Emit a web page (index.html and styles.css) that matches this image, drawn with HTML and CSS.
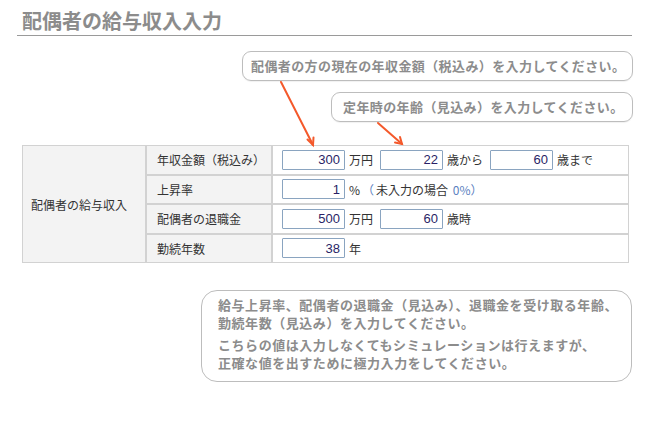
FILE: index.html
```html
<!DOCTYPE html>
<html lang="ja">
<head>
<meta charset="utf-8">
<title>配偶者の給与収入入力</title>
<link rel="stylesheet" href="styles.css">
</head>
<body>
<div class="page">
  <h1 class="title">配偶者の給与収入入力</h1>
  <div class="bubbles">
    <div class="bubble bubble-wide">配偶者の方の現在の年収金額（税込み）を入力してください。</div>
    <div class="bubble bubble-narrow">定年時の年齢（見込み）を入力してください。</div>
  </div>
  <table class="form">
    <tr>
      <th class="group" rowspan="4">配偶者の給与収入</th>
      <th class="label">年収金額（税込み）</th>
      <td class="field"><div class="inputs"><input class="num" value="300"><span class="unit">万円</span><input class="num" value="22"><span class="unit">歳から</span><input class="num" value="60"><span class="unit">歳まで</span></div></td>
    </tr>
    <tr>
      <th class="label">上昇率</th>
      <td class="field"><div class="inputs"><input class="num" value="1"><span class="unit">%<span class="note">（</span>未入力の場合 <span class="note">0%）</span></span></div></td>
    </tr>
    <tr>
      <th class="label">配偶者の退職金</th>
      <td class="field"><div class="inputs"><input class="num" value="500"><span class="unit">万円</span><input class="num" value="60"><span class="unit">歳時</span></div></td>
    </tr>
    <tr>
      <th class="label">勤続年数</th>
      <td class="field"><div class="inputs"><input class="num" value="38"><span class="unit">年</span></div></td>
    </tr>
  </table>
  <div class="notebox">
    <p>給与上昇率、配偶者の退職金（見込み）、退職金を受け取る年齢、<br>勤続年数（見込み）を入力してください。</p>
    <p>こちらの値は入力しなくてもシミュレーションは行えますが、<br>正確な値を出すために極力入力をしてください。</p>
  </div>
  <svg class="arrows" width="650" height="430" viewBox="0 0 650 430">
    <g stroke="#f4592b" stroke-width="2" fill="none" stroke-linecap="round">
      <line x1="281" y1="82" x2="313" y2="145"/>
      <polyline points="307.5,139.5 313,145 313.5,137.5"/>
      <line x1="378" y1="123" x2="402" y2="144"/>
      <polyline points="395,142.5 402,144 400,137"/>
    </g>
  </svg>
</div>
</body>
</html>
```
FILE: styles.css
```css
html, body {
  margin: 0;
  padding: 0;
  background: #ffffff;
}
.page {
  position: relative;
  width: 650px;
  height: 430px;
  font-family: "Noto Sans CJK JP", "Noto Sans", sans-serif;
  color: #333333;
}
.title {
  margin: 0 18px 0 17px;
  padding: 8px 0 1px 5px;
  font-size: 20px;
  line-height: 26px;
  font-weight: bold;
  color: #8c8c8c;
  border-bottom: 1px solid #9a9a9a;
}
.bubbles {
  display: flex;
  flex-direction: column;
  align-items: flex-end;
  gap: 11px;
  margin: 15px 17px 0 0;
}
.bubble {
  box-sizing: border-box;
  height: 30px;
  line-height: 28px;
  border: 1px solid #bdbdbd;
  border-radius: 9px;
  font-size: 13px;
  font-weight: bold;
  color: #8c8c8c;
  letter-spacing: 0.4px;
  padding: 0 0 0 8px;
  white-space: nowrap;
  box-shadow: 0 1px 1px rgba(0,0,0,0.06);
}
.bubble-wide { width: 391px; }
.bubble-narrow { width: 302px; padding-left: 11px; }
.form {
  margin: 23px 21px 0 22px;
  width: 607px;
  border-collapse: separate;
  border-spacing: 0;
  font-size: 12px;
}
.form th, .form td {
  border: 1px solid #d2d2d2;
  padding: 0;
  height: 27.5px;
  text-align: left;
  font-weight: normal;
  vertical-align: middle;
}
.group {
  width: 114px;
  background: #f3f3f3;
  padding-left: 8px !important;
}
.label {
  width: 114px;
  background: #f3f3f3;
  padding-left: 10px !important;
}
.field {
  background: #ffffff;
  padding-left: 9px !important;
}
.inputs {
  display: flex;
  align-items: center;
}
.num {
  box-sizing: border-box;
  width: 63px;
  height: 20px;
  margin: 0 4px 0 0;
  padding: 0 4px;
  border: 1px solid #8aa4c0;
  border-radius: 1px;
  text-align: right;
  font-family: "Liberation Sans", Arial, sans-serif;
  font-size: 13px;
  color: #2a1f66;
  background: #ffffff;
}
.unit {
  margin-right: 7px;
  white-space: nowrap;
}
.note {
  color: #5c7fbf;
  margin: 0 2px;
}
.notebox {
  box-sizing: border-box;
  margin: 27px 18px 0 201px;
  height: 92px;
  border: 1px solid #bdbdbd;
  border-radius: 16px;
  padding: 5px 0 0 16px;
  font-size: 13px;
  font-weight: bold;
  color: #8c8c8c;
  letter-spacing: 0.55px;
  line-height: 18px;
  white-space: nowrap;
}
.notebox p {
  margin: 0 0 4px 0;
}
.arrows {
  position: absolute;
  left: 0;
  top: 0;
  pointer-events: none;
}
```
